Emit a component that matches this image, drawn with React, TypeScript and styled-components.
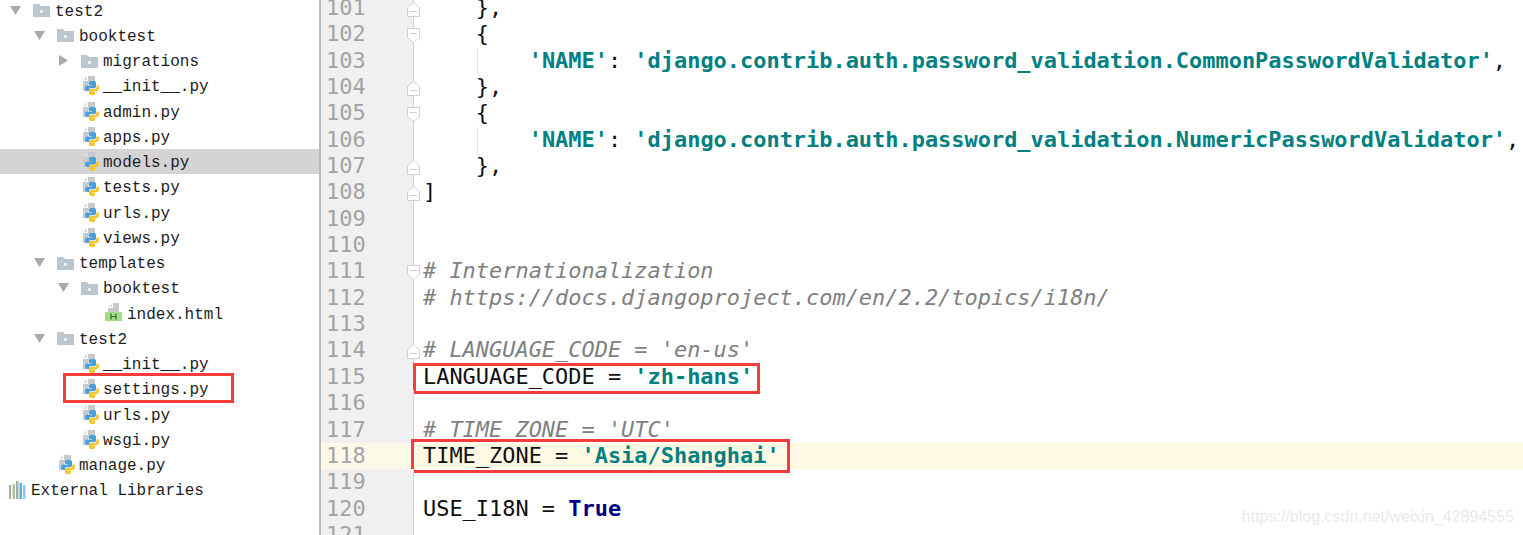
import type { ReactNode } from "react";
import styled, { createGlobalStyle } from "styled-components";

const GlobalStyle = createGlobalStyle`
  html, body {
    margin: 0;
    background: #fff;
    overflow: hidden;
  }
`;

const Page = styled.div`
  position: relative;
  display: grid;
  grid-template-columns: 319px 1fr;
  width: 1523px;
  height: 535px;
  overflow: hidden;
  background: #fff;
`;

/* project tree */

const Tree = styled.div`
  margin-top: -2.6px;
  font-family: "Liberation Mono", monospace;
  font-size: 16px;
  color: #1c1c1c;
`;

const TreeRow = styled.div<{ $depth: number; $selected?: boolean }>`
  display: flex;
  align-items: center;
  height: 25.26px;
  padding-left: ${(p) => 9 + p.$depth * 24}px;
  background: ${(p) => (p.$selected ? "#d4d4d4" : "transparent")};
`;

const ArrowSlot = styled.span`
  display: flex;
  align-items: center;
  width: 24px;
  flex: none;
`;

const IconSlot = styled.span`
  display: flex;
  align-items: center;
  width: 22px;
  flex: none;
`;

const Arrow = styled.svg<{ $open?: boolean }>`
  display: block;
  margin-left: ${(p) => (p.$open ? 1 : 2)}px;
  fill: #a9a9a9;
`;

const Label = styled.span`
  display: block;
  padding-top: 3px;
  white-space: pre;
`;

/* red annotation frame around a piece of text */
const Marked = styled.span<{ $inset: string }>`
  position: relative;
  display: inline-block;

  &::after {
    content: "";
    position: absolute;
    inset: ${(p) => p.$inset};
    border: 3px solid #f43c3c;
    pointer-events: none;
  }
`;

const FolderIcon = () => (
  <svg width="17" height="14" viewBox="0 0 17 14">
    <path d="M0 1h6l2 2h9v11H0z" fill="#bcc6ce" />
    <rect x="7" y="7" width="3" height="3" fill="#eef1f3" />
  </svg>
);

const PythonIcon = () => (
  <svg width="18" height="19" viewBox="0 0 18 19">
    <path d="M7 0h7v8H7v7H2V5h5z" fill="#c6cacd" />
    <path d="M2 4l4-4v4z" fill="#dcdee0" />
    <path
      d="M10 5h3c1.300 0 2 .8 2 2v3.500c0 1-.8 1.700-1.800 1.700H9.500c-1 0-1.500.6-1.500 1.500V15H6.500C5 15 4 14 4 12.300 4 10.500 5 9.500 6.500 9.500H11V9H8V7c0-1.300.8-2 2-2z"
      fill="#4a9fd8"
    />
    <path
      d="M17.500 9.500c.5 0 .5 1 .5 2.800 0 1.700-1 2.700-2.500 2.700H11v.5h3v2c0 1.300-.8 1.500-2 1.500H9.500C8.200 18.500 8 17.700 8 16.500v-2c0-1 .5-1.500 1.500-1.500h4c1 0 1.800-.7 1.800-1.700V9.500z"
      fill="#f7c62f"
    />
  </svg>
);

const HtmlIcon = () => (
  <svg width="18" height="20" viewBox="0 0 18 20">
    <path d="M8 0h6v9H3V5h5z" fill="#c6cacd" />
    <path d="M3 4l4-4v4z" fill="#dcdee0" />
    <rect x="0" y="9" width="17" height="9" fill="#a5dc8c" />
    <path d="M6 10.500v6M11 10.500v6M6 13.500h5" stroke="#2f6d2f" strokeWidth="1.200" fill="none" />
  </svg>
);

const LibrariesIcon = () => (
  <svg width="18" height="18" viewBox="0 0 18 18">
    <rect x="0" y="4" width="2" height="14" fill="#a4abb0" />
    <rect x="3.500" y="3" width="2.500" height="15" fill="#a5c98f" />
    <rect x="7" y="0" width="2.500" height="18" fill="#a4abb0" />
    <rect x="10.500" y="2" width="2.500" height="16" fill="#57b0e0" />
    <rect x="14" y="4" width="2.500" height="14" fill="#8fc8e8" />
  </svg>
);

type Node = {
  name: string;
  depth: number;
  kind: "open" | "closed" | "py" | "html" | "lib";
  selected?: boolean;
  marked?: boolean;
};

const nodes: Node[] = [
  { name: "test2", depth: 0, kind: "open" },
  { name: "booktest", depth: 1, kind: "open" },
  { name: "migrations", depth: 2, kind: "closed" },
  { name: "__init__.py", depth: 2, kind: "py" },
  { name: "admin.py", depth: 2, kind: "py" },
  { name: "apps.py", depth: 2, kind: "py" },
  { name: "models.py", depth: 2, kind: "py", selected: true },
  { name: "tests.py", depth: 2, kind: "py" },
  { name: "urls.py", depth: 2, kind: "py" },
  { name: "views.py", depth: 2, kind: "py" },
  { name: "templates", depth: 1, kind: "open" },
  { name: "booktest", depth: 2, kind: "open" },
  { name: "index.html", depth: 3, kind: "html" },
  { name: "test2", depth: 1, kind: "open" },
  { name: "__init__.py", depth: 2, kind: "py" },
  { name: "settings.py", depth: 2, kind: "py", marked: true },
  { name: "urls.py", depth: 2, kind: "py" },
  { name: "wsgi.py", depth: 2, kind: "py" },
  { name: "manage.py", depth: 1, kind: "py" },
  { name: "External Libraries", depth: 0, kind: "lib" },
];

const TreeItem = ({ node }: { node: Node }) => {
  const isFolder = node.kind === "open" || node.kind === "closed";
  return (
    <TreeRow $depth={node.depth} $selected={node.selected}>
      {node.kind !== "lib" && (
        <ArrowSlot>
          {node.kind === "open" && (
            <Arrow $open width="11" height="9" viewBox="0 0 11 9">
              <path d="M0 0h11L5.500 9z" />
            </Arrow>
          )}
          {node.kind === "closed" && (
            <Arrow width="9" height="11" viewBox="0 0 9 11">
              <path d="M0 0l9 5.500L0 11z" />
            </Arrow>
          )}
        </ArrowSlot>
      )}
      <IconSlot>
        {isFolder && <FolderIcon />}
        {node.kind === "py" && <PythonIcon />}
        {node.kind === "html" && <HtmlIcon />}
        {node.kind === "lib" && <LibrariesIcon />}
      </IconSlot>
      {node.marked ? (
        <Marked $inset="-5.500px -25px -3.500px -40px">
          <Label>{node.name}</Label>
        </Marked>
      ) : (
        <Label>{node.name}</Label>
      )}
    </TreeRow>
  );
};

/* editor */

const Editor = styled.div`
  border-left: 2px solid #b9b9b9;
  margin-top: -5.2px;
  font-family: "DejaVu Sans Mono", monospace;
  font-size: 21.94px;
  line-height: 26.37px;
  color: #101010;
`;

const Line = styled.div<{ $active?: boolean }>`
  display: grid;
  grid-template-columns: 93px 1fr;
  height: 26.37px;
  background: ${(p) => (p.$active ? "#fffae3" : "transparent")};
`;

const Gutter = styled.div<{ $active?: boolean }>`
  position: relative;
  padding-left: 5px;
  color: #a3a3a3;
  background: ${(p) => (p.$active ? "#fdf9e8" : "#f0f0f0")};
  border-right: 1px solid #d2d2d2;
`;

const FoldMark = styled.svg`
  position: absolute;
  top: 7px;
  right: -7px;
  fill: #fff;
  stroke: #cfcfcf;
`;

const Code = styled.div<{ $guide?: boolean }>`
  padding-left: 9px;
  white-space: pre;
  background: ${(p) =>
    p.$guide ? "linear-gradient(#e4e4e4, #e4e4e4) 63px 0 / 1px 100% no-repeat" : "none"};
`;

const Str = styled.span`
  color: #008080;
  font-weight: bold;
`;

const Comment = styled.span`
  color: #808080;
  font-style: italic;
`;

const Keyword = styled.span`
  color: #000080;
  font-weight: bold;
`;

const Watermark = styled.div`
  position: absolute;
  right: 9px;
  bottom: 9px;
  font-family: "Liberation Sans", sans-serif;
  font-size: 16px;
  color: #e9e9e9;
`;

const Fold = ({ up }: { up?: boolean }) => (
  <FoldMark width="13" height="15" viewBox="0 0 13 15">
    <path d={up ? "M.5 14.500V5.500L6.500 .5l6 5v9z" : "M.5 .5h12v9l-6 5-6-5z"} />
    <path d={up ? "M3 9.500h7" : "M3 5.500h7"} fill="none" />
  </FoldMark>
);

const validator = (name: string) => (
  <>
    {"        "}
    <Str>'NAME'</Str>: <Str>'django.contrib.auth.password_validation.{name}'</Str>,
  </>
);

type EditorLine = {
  no: number;
  fold?: "up" | "down";
  guide?: boolean;
  active?: boolean;
  code?: ReactNode;
};

const lines: EditorLine[] = [
  { no: 101, fold: "up", code: "    }," },
  { no: 102, fold: "down", code: "    {" },
  { no: 103, guide: true, code: validator("CommonPasswordValidator") },
  { no: 104, fold: "up", code: "    }," },
  { no: 105, fold: "down", code: "    {" },
  { no: 106, guide: true, code: validator("NumericPasswordValidator") },
  { no: 107, fold: "up", code: "    }," },
  { no: 108, fold: "up", code: "]" },
  { no: 109 },
  { no: 110 },
  { no: 111, fold: "down", code: <Comment># Internationalization</Comment> },
  { no: 112, code: <Comment># https://docs.djangoproject.com/en/2.2/topics/i18n/</Comment> },
  { no: 113 },
  { no: 114, fold: "up", code: <Comment># LANGUAGE_CODE = 'en-us'</Comment> },
  {
    no: 115,
    code: (
      <Marked $inset="-1px -7px -3.600px -10px">
        LANGUAGE_CODE = <Str>'zh-hans'</Str>
      </Marked>
    ),
  },
  { no: 116 },
  { no: 117, code: <Comment># TIME_ZONE = 'UTC'</Comment> },
  {
    no: 118,
    active: true,
    code: (
      <Marked $inset="-4px -10px -3.600px -12px">
        TIME_ZONE = <Str>'Asia/Shanghai'</Str>
      </Marked>
    ),
  },
  { no: 119 },
  {
    no: 120,
    code: (
      <>
        USE_I18N = <Keyword>True</Keyword>
      </>
    ),
  },
  { no: 121 },
];

const App = () => (
  <Page>
    <GlobalStyle />
    <Tree>
      {nodes.map((node, i) => (
        <TreeItem key={i} node={node} />
      ))}
    </Tree>
    <Editor>
      {lines.map((line) => (
        <Line key={line.no} $active={line.active}>
          <Gutter $active={line.active}>
            {line.no}
            {line.fold && <Fold up={line.fold === "up"} />}
          </Gutter>
          <Code $guide={line.guide}>{line.code}</Code>
        </Line>
      ))}
    </Editor>
    <Watermark>https://blog.csdn.net/weixin_42894555</Watermark>
  </Page>
);

export default App;
